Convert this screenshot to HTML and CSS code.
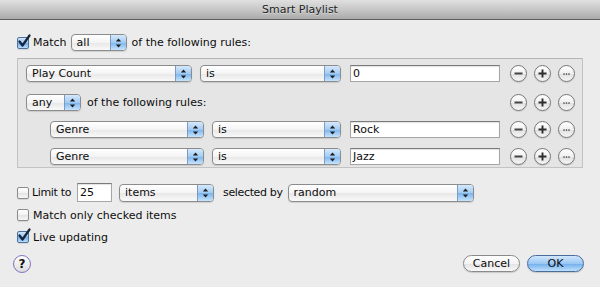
FILE: index.html
```html
<!DOCTYPE html>
<html>
<head>
<meta charset="utf-8">
<link rel="stylesheet" href="styles.css">
</head>
<body>
<div class="window">
  <div class="titlebar">Smart Playlist</div>
  <div class="content">
    <div class="row match-row">
      <span class="check checked"><svg class="tick" width="16" height="16" viewBox="0 0 16 16"><path d="M2.5 7.5 L5.5 11.5 L12.5 1.5" fill="none" stroke="#15253a" stroke-width="2.2" stroke-linecap="round" stroke-linejoin="round"/></svg></span>
      <span class="label">Match</span>
      <div class="popup pop-all"><span class="popup-label">all</span><span class="popup-arrows"><svg width="7" height="10" viewBox="0 0 7 10"><path d="M3.5 0.5 L6.2 3.6 H0.8Z M3.5 9.5 L6.2 6.4 H0.8Z" fill="#1e1e1e"/></svg></span></div>
      <span class="label gap-l">of the following rules:</span>
    </div>

    <div class="rules">
      <div class="rule-row first">
        <div class="popup pop-field"><span class="popup-label">Play Count</span><span class="popup-arrows"><svg width="7" height="10" viewBox="0 0 7 10"><path d="M3.5 0.5 L6.2 3.6 H0.8Z M3.5 9.5 L6.2 6.4 H0.8Z" fill="#1e1e1e"/></svg></span></div>
        <div class="popup pop-op"><span class="popup-label">is</span><span class="popup-arrows"><svg width="7" height="10" viewBox="0 0 7 10"><path d="M3.5 0.5 L6.2 3.6 H0.8Z M3.5 9.5 L6.2 6.4 H0.8Z" fill="#1e1e1e"/></svg></span></div>
        <div class="field">0</div>
        <div class="round-group">
          <span class="round"><svg width="11" height="11" viewBox="0 0 11 11"><path d="M1.5 5.5H9.5" stroke="#444" stroke-width="2"/></svg></span>
          <span class="round"><svg width="11" height="11" viewBox="0 0 11 11"><path d="M1.5 5.5H9.5 M5.5 1.5V9.5" stroke="#2e2e2e" stroke-width="1.9"/></svg></span>
          <span class="round"><svg width="11" height="11" viewBox="0 0 11 11"><circle cx="3" cy="6" r="0.85" fill="#444"/><circle cx="5.5" cy="6" r="0.85" fill="#444"/><circle cx="8" cy="6" r="0.85" fill="#444"/></svg></span>
        </div>
      </div>

      <div class="rule-row any-row">
        <div class="popup pop-any"><span class="popup-label">any</span><span class="popup-arrows"><svg width="7" height="10" viewBox="0 0 7 10"><path d="M3.5 0.5 L6.2 3.6 H0.8Z M3.5 9.5 L6.2 6.4 H0.8Z" fill="#1e1e1e"/></svg></span></div>
        <span class="label gap-s">of the following rules:</span>
        <div class="round-group">
          <span class="round"><svg width="11" height="11" viewBox="0 0 11 11"><path d="M1.5 5.5H9.5" stroke="#444" stroke-width="2"/></svg></span>
          <span class="round"><svg width="11" height="11" viewBox="0 0 11 11"><path d="M1.5 5.5H9.5 M5.5 1.5V9.5" stroke="#2e2e2e" stroke-width="1.9"/></svg></span>
          <span class="round"><svg width="11" height="11" viewBox="0 0 11 11"><circle cx="3" cy="6" r="0.85" fill="#444"/><circle cx="5.5" cy="6" r="0.85" fill="#444"/><circle cx="8" cy="6" r="0.85" fill="#444"/></svg></span>
        </div>
      </div>

      <div class="rule-row sub">
        <div class="popup pop-field-sub"><span class="popup-label">Genre</span><span class="popup-arrows"><svg width="7" height="10" viewBox="0 0 7 10"><path d="M3.5 0.5 L6.2 3.6 H0.8Z M3.5 9.5 L6.2 6.4 H0.8Z" fill="#1e1e1e"/></svg></span></div>
        <div class="popup pop-op-sub"><span class="popup-label">is</span><span class="popup-arrows"><svg width="7" height="10" viewBox="0 0 7 10"><path d="M3.5 0.5 L6.2 3.6 H0.8Z M3.5 9.5 L6.2 6.4 H0.8Z" fill="#1e1e1e"/></svg></span></div>
        <div class="field">Rock</div>
        <div class="round-group">
          <span class="round"><svg width="11" height="11" viewBox="0 0 11 11"><path d="M1.5 5.5H9.5" stroke="#444" stroke-width="2"/></svg></span>
          <span class="round"><svg width="11" height="11" viewBox="0 0 11 11"><path d="M1.5 5.5H9.5 M5.5 1.5V9.5" stroke="#2e2e2e" stroke-width="1.9"/></svg></span>
          <span class="round"><svg width="11" height="11" viewBox="0 0 11 11"><circle cx="3" cy="6" r="0.85" fill="#444"/><circle cx="5.5" cy="6" r="0.85" fill="#444"/><circle cx="8" cy="6" r="0.85" fill="#444"/></svg></span>
        </div>
      </div>

      <div class="rule-row sub">
        <div class="popup pop-field-sub"><span class="popup-label">Genre</span><span class="popup-arrows"><svg width="7" height="10" viewBox="0 0 7 10"><path d="M3.5 0.5 L6.2 3.6 H0.8Z M3.5 9.5 L6.2 6.4 H0.8Z" fill="#1e1e1e"/></svg></span></div>
        <div class="popup pop-op-sub"><span class="popup-label">is</span><span class="popup-arrows"><svg width="7" height="10" viewBox="0 0 7 10"><path d="M3.5 0.5 L6.2 3.6 H0.8Z M3.5 9.5 L6.2 6.4 H0.8Z" fill="#1e1e1e"/></svg></span></div>
        <div class="field">Jazz</div>
        <div class="round-group">
          <span class="round"><svg width="11" height="11" viewBox="0 0 11 11"><path d="M1.5 5.5H9.5" stroke="#444" stroke-width="2"/></svg></span>
          <span class="round"><svg width="11" height="11" viewBox="0 0 11 11"><path d="M1.5 5.5H9.5 M5.5 1.5V9.5" stroke="#2e2e2e" stroke-width="1.9"/></svg></span>
          <span class="round"><svg width="11" height="11" viewBox="0 0 11 11"><circle cx="3" cy="6" r="0.85" fill="#444"/><circle cx="5.5" cy="6" r="0.85" fill="#444"/><circle cx="8" cy="6" r="0.85" fill="#444"/></svg></span>
        </div>
      </div>
    </div>

    <div class="row limit-row">
      <span class="check"></span>
      <span class="label tight">Limit to</span>
      <div class="field field-num">25</div>
      <div class="popup pop-items"><span class="popup-label">items</span><span class="popup-arrows"><svg width="7" height="10" viewBox="0 0 7 10"><path d="M3.5 0.5 L6.2 3.6 H0.8Z M3.5 9.5 L6.2 6.4 H0.8Z" fill="#1e1e1e"/></svg></span></div>
      <span class="label gap-m tight">selected by</span>
      <div class="popup pop-random"><span class="popup-label">random</span><span class="popup-arrows"><svg width="7" height="10" viewBox="0 0 7 10"><path d="M3.5 0.5 L6.2 3.6 H0.8Z M3.5 9.5 L6.2 6.4 H0.8Z" fill="#1e1e1e"/></svg></span></div>
    </div>

    <div class="row opt-row opt-first">
      <span class="check"></span>
      <span class="label">Match only checked items</span>
    </div>

    <div class="row opt-row opt-second">
      <span class="check checked"><svg class="tick" width="16" height="16" viewBox="0 0 16 16"><path d="M2.5 7.5 L5.5 11.5 L12.5 1.5" fill="none" stroke="#15253a" stroke-width="2.2" stroke-linecap="round" stroke-linejoin="round"/></svg></span>
      <span class="label">Live updating</span>
    </div>

    <div class="footer">
      <span class="help">?</span>
      <div class="buttons">
        <span class="btn">Cancel</span>
        <span class="btn btn-default">OK</span>
      </div>
    </div>
  </div>
</div>
</body>
</html>
```

FILE: styles.css
```css
html, body {
  margin: 0;
  padding: 0;
}
body {
  width: 600px;
  height: 287px;
  overflow: hidden;
  background: #ececec;
  font-family: "DejaVu Sans", "Lucida Grande", sans-serif;
  font-size: 11px;
  color: #0c0c0c;
}
.window {
  width: 600px;
  height: 287px;
  background: #ececec;
}
.titlebar {
  height: 19px;
  line-height: 19px;
  border-bottom: 1px solid #5e5e5e;
  background: linear-gradient(#e0e0e0, #c7c7c7 50%, #aaaaaa);
  text-align: center;
  color: #1e1e1e;
  text-shadow: 0 1px 0 rgba(255,255,255,0.45);
}
.content {
  padding: 0 17px;
  display: flex;
  flex-direction: column;
}
.row {
  display: flex;
  align-items: center;
}
.match-row {
  margin-top: 14px;
  height: 17px;
}
.label {
  margin-left: 4px;
  white-space: nowrap;
}
.tight { letter-spacing: -0.35px; margin-left: 3px; }
.gap-l { margin-left: 5px; }
.gap-s { margin-left: 6px; }
.gap-m { margin-left: 9px; }

/* checkbox */
.check {
  position: relative;
  flex: none;
  width: 12px;
  height: 12px;
  box-sizing: border-box;
  border: 1px solid #8b8b8b;
  border-radius: 2px;
  background: linear-gradient(#ffffff, #f1f1f1 50%, #e3e3e3 51%, #f7f7f7);
  box-shadow: 0 1px 1px rgba(0,0,0,0.1);
}
.check.checked {
  border-color: #4f729d;
  background: linear-gradient(#cfe5fb, #95c4f2 50%, #6fabea 51%, #b9defb);
}
.tick {
  position: absolute;
  left: -1px;
  top: -4px;
}

/* popup buttons */
.popup {
  display: flex;
  align-items: center;
  height: 17px;
  box-sizing: border-box;
  border: 1px solid #8c8c8c;
  border-radius: 4px;
  background: linear-gradient(#ffffff, #f4f4f4 50%, #e7e7e7 51%, #f9f9f9);
  box-shadow: 0 1px 1px rgba(0,0,0,0.12);
  overflow: hidden;
  flex: none;
}
.popup-label {
  flex: 1;
  padding-left: 5px;
  white-space: nowrap;
}
.popup-arrows {
  width: 15px;
  align-self: stretch;
  border-left: 1px solid #7e9bbd;
  background: linear-gradient(#d4e9fc, #a2cbf3 50%, #7ab4ee 51%, #c7e4fd);
  display: flex;
  align-items: center;
  justify-content: center;
}
.pop-all { width: 56px; margin-left: 4px; }
.pop-field { width: 166px; }
.pop-op { width: 141px; margin-left: 8px; }
.pop-any { width: 55px; }
.pop-field-sub { width: 154px; }
.pop-op-sub { width: 129px; margin-left: 8px; }
.pop-items { width: 95px; margin-left: 7px; height: 18px; }
.pop-random { width: 186px; margin-left: 5px; height: 18px; }

/* rules box */
.rules {
  margin-top: 7px;
  height: 110px;
  box-sizing: border-box;
  border: 1px solid #c3c3c3;
  border-top-color: #b5b5b5;
  background: #e5e5e5;
  padding: 6px 7px 2px 8px;
  display: flex;
  flex-direction: column;
}
.rule-row {
  display: flex;
  align-items: center;
  height: 17px;
}
.any-row { margin-top: 12px; }
.sub { margin-top: 10px; padding-left: 24px; }

.field {
  width: 150px;
  height: 17px;
  box-sizing: border-box;
  margin-left: 9px;
  border: 1px solid #a6a6a6;
  border-top-color: #7a7a7a;
  background: #fff;
  box-shadow: inset 0 1px 1px rgba(0,0,0,0.12);
  padding-left: 2px;
  display: flex;
  align-items: center;
  flex: none;
}
.field-num {
  width: 35px;
  height: 19px;
  margin-left: 6px;
}

.round-group {
  margin-left: auto;
  display: flex;
  gap: 7px;
}
.round {
  width: 17px;
  height: 17px;
  box-sizing: border-box;
  border-radius: 50%;
  border: 1px solid #777;
  background: linear-gradient(#ffffff, #f0f0f0 50%, #e0e0e0 51%, #f6f6f6);
  box-shadow: 0 1px 1px rgba(0,0,0,0.12);
  display: flex;
  align-items: center;
  justify-content: center;
}

.limit-row {
  margin-top: 15px;
  height: 19px;
}
.opt-row { height: 14px; }
.opt-first { margin-top: 6px; }
.opt-second { margin-top: 8px; }

.footer {
  margin-top: 11px;
  height: 18px;
  display: flex;
  align-items: flex-start;
  justify-content: space-between;
}
.help {
  margin-left: -4px;
  width: 18px;
  height: 18px;
  box-sizing: border-box;
  border-radius: 50%;
  border: 1.5px solid #8470c0;
  background: linear-gradient(#ffffff, #ececec 55%, #dcdcdc);
  display: flex;
  align-items: center;
  justify-content: center;
  font-weight: bold;
  font-size: 12px;
  color: #111;
}
.buttons {
  display: flex;
  gap: 7px;
  margin-right: -1px;
}
.btn {
  width: 57px;
  height: 17px;
  box-sizing: border-box;
  border-radius: 9px;
  border: 1px solid #8a8a8a;
  background: linear-gradient(#ffffff, #f3f3f3 50%, #e3e3e3 51%, #f8f8f8);
  box-shadow: 0 1px 1px rgba(0,0,0,0.15);
  display: flex;
  align-items: center;
  justify-content: center;
}
.btn-default {
  border-color: #4a6d9c;
  background: linear-gradient(#d1e7fc, #9ac7f3 50%, #6fadec 51%, #bfe1fc);
}
```
